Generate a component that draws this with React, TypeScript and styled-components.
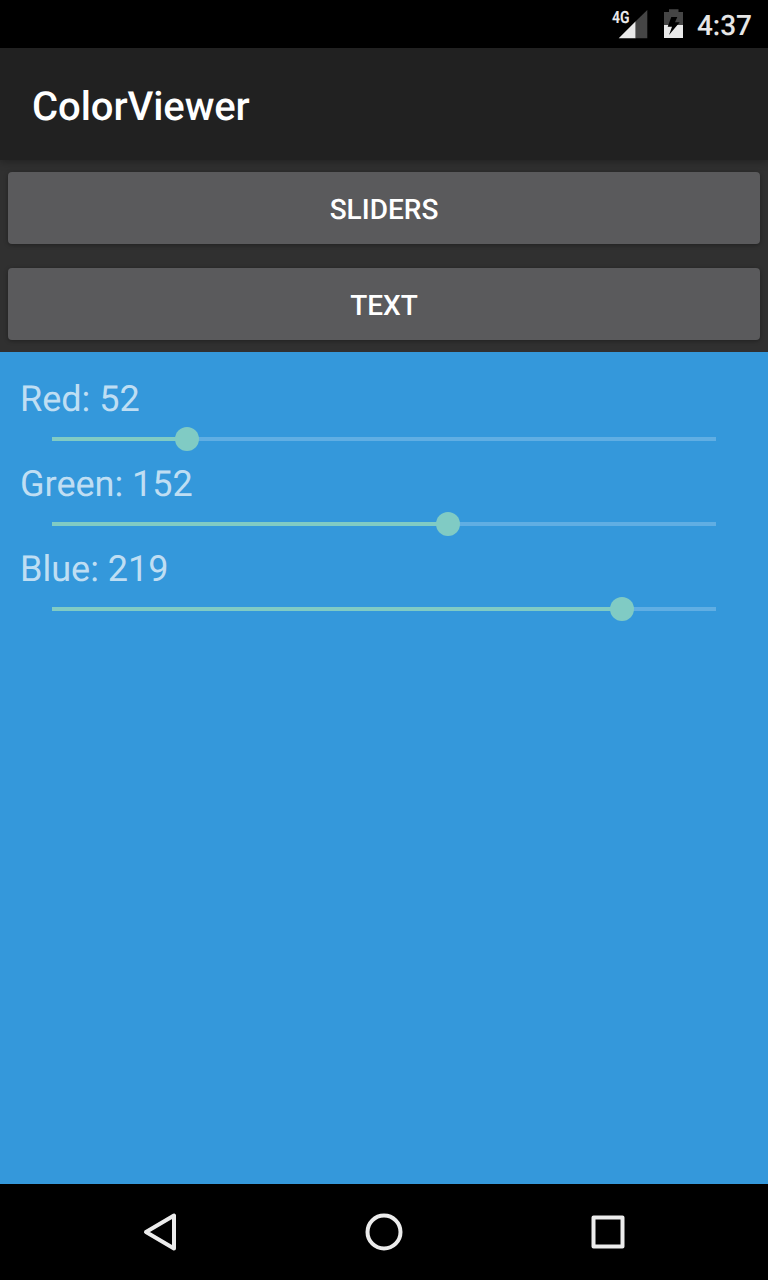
import React, { useState } from "react";
import styled, { createGlobalStyle } from "styled-components";

const GlobalStyle = createGlobalStyle`
  * { box-sizing: border-box; }
  body { margin: 0; background: #000; font-family: Roboto, "Liberation Sans", sans-serif; text-rendering: geometricPrecision; }
`;

const Screen = styled.div`
  width: 768px;
  height: 1280px;
  display: flex;
  flex-direction: column;
  overflow: hidden;
  background: #303030;
`;

const StatusBar = styled.header`
  height: 48px;
  flex: none;
  display: flex;
  align-items: center;
  justify-content: flex-end;
  padding-right: 16px;
  background: #000;
`;

const StatusIcons = styled.svg`
  display: block;
  margin-right: 13px;
`;

const Clock = styled.span`
  font-size: 28px;
  font-weight: 500;
  line-height: 32px;
  padding-top: 4px;
  color: #e6e6e6;
`;

const AppBar = styled.div`
  height: 112px;
  flex: none;
  display: flex;
  align-items: center;
  padding: 6px 32px 0;
  background: #212121;
  box-shadow: 0 2px 8px rgba(0, 0, 0, 0.3);
`;

const Title = styled.h1`
  margin: 0;
  font-size: 40px;
  font-weight: 500;
  line-height: 48px;
  letter-spacing: -0.08px;
  color: #fff;
`;

const ButtonColumn = styled.div`
  height: 192px;
  flex: none;
  display: flex;
  flex-direction: column;
  gap: 24px;
  padding: 12px 8px;
`;

const ModeButton = styled.button`
  height: 72px;
  padding: 4px 0 0;
  border: 0;
  border-radius: 4px;
  background: #5a5a5c;
  box-shadow: 0 1px 4px rgba(0, 0, 0, 0.35);
  color: #fff;
  font: 500 28px/32px Roboto, "Liberation Sans", sans-serif;
  text-rendering: inherit;
`;

const ColorPanel = styled.main<{ $color: string }>`
  flex: 1;
  padding: 26px 20px;
  background: ${(p) => p.$color};
  z-index: 1;
`;

const Channel = styled.section`
  height: 85px;
`;

const ChannelLabel = styled.label`
  display: block;
  height: 42px;
  font-size: 36px;
  line-height: 43px;
  color: rgba(255, 255, 255, 0.7);
`;

const Slider = styled.div`
  height: 38px;
  display: flex;
  align-items: center;
  padding: 0 32px;
`;

const Fill = styled.div`
  height: 4px;
  flex: none;
  background: #80cbc4;
`;

const Thumb = styled.div`
  width: 24px;
  height: 24px;
  flex: none;
  margin: 0 -12px;
  border-radius: 50%;
  background: #80cbc4;
  z-index: 1;
`;

const Rest = styled.div`
  height: 4px;
  flex: 1;
  background: rgba(255, 255, 255, 0.22);
`;

const NavBar = styled.nav`
  height: 96px;
  flex: none;
  display: flex;
  align-items: center;
  justify-content: space-between;
  padding: 0 128px;
  background: #000;
`;

const NavIcon = styled.svg`
  display: block;
  fill: none;
  stroke: #ececec;
  stroke-width: 4;
  stroke-linejoin: round;
`;

const NetworkLabel = styled.text`
  font: 700 17px Roboto, "Liberation Sans", sans-serif;
  fill: #e9e9e9;
`;

const channels = [
  { name: "Red", value: 52 },
  { name: "Green", value: 152 },
  { name: "Blue", value: 219 },
];

export default function App() {
  const [values] = useState(channels);
  const color = `rgb(${values.map((c) => c.value).join(", ")})`;
  return (
    <>
      <GlobalStyle />
      <Screen>
        <StatusBar>
          <StatusIcons width="74" height="48" viewBox="610 0 74 48">
            <path d="M618.7 38.3L635.7 21.3V38.3Z" fill="#e9e9e9" />
            <path d="M635.7 21.3L647.3 10V38.3H635.7Z" fill="#454545" />
            <NetworkLabel x="612" y="22.5" textLength="17.5" lengthAdjust="spacingAndGlyphs">4G</NetworkLabel>
            <path d="M664 25V12H669V9.3H678.5V12H683V25Z" fill="#454545" />
            <path d="M664 25H683V38H664Z" fill="#e9e9e9" />
            <path d="M671.3 17H677.3L675 22.2H679.7L669 35L672 26.7H667.7Z" fill="#000" />
          </StatusIcons>
          <Clock>4:37</Clock>
        </StatusBar>
        <AppBar>
          <Title>ColorViewer</Title>
        </AppBar>
        <ButtonColumn>
          <ModeButton>SLIDERS</ModeButton>
          <ModeButton>TEXT</ModeButton>
        </ButtonColumn>
        <ColorPanel $color={color}>
          {values.map((c) => (
            <Channel key={c.name}>
              <ChannelLabel>{c.name}: {c.value}</ChannelLabel>
              <Slider>
                <Fill style={{ width: `${(c.value / 255) * 100}%` }} />
                <Thumb />
                <Rest />
              </Slider>
            </Channel>
          ))}
        </ColorPanel>
        <NavBar>
          <NavIcon width="64" height="64" viewBox="128 1200 64 64">
            <path d="M146 1232L174 1215.5V1248.5Z" />
          </NavIcon>
          <NavIcon width="64" height="64" viewBox="352 1200 64 64">
            <circle cx="384" cy="1232" r="16.5" />
          </NavIcon>
          <NavIcon width="64" height="64" viewBox="576 1200 64 64">
            <rect x="593.5" y="1217.5" width="29" height="29" />
          </NavIcon>
        </NavBar>
      </Screen>
    </>
  );
}
